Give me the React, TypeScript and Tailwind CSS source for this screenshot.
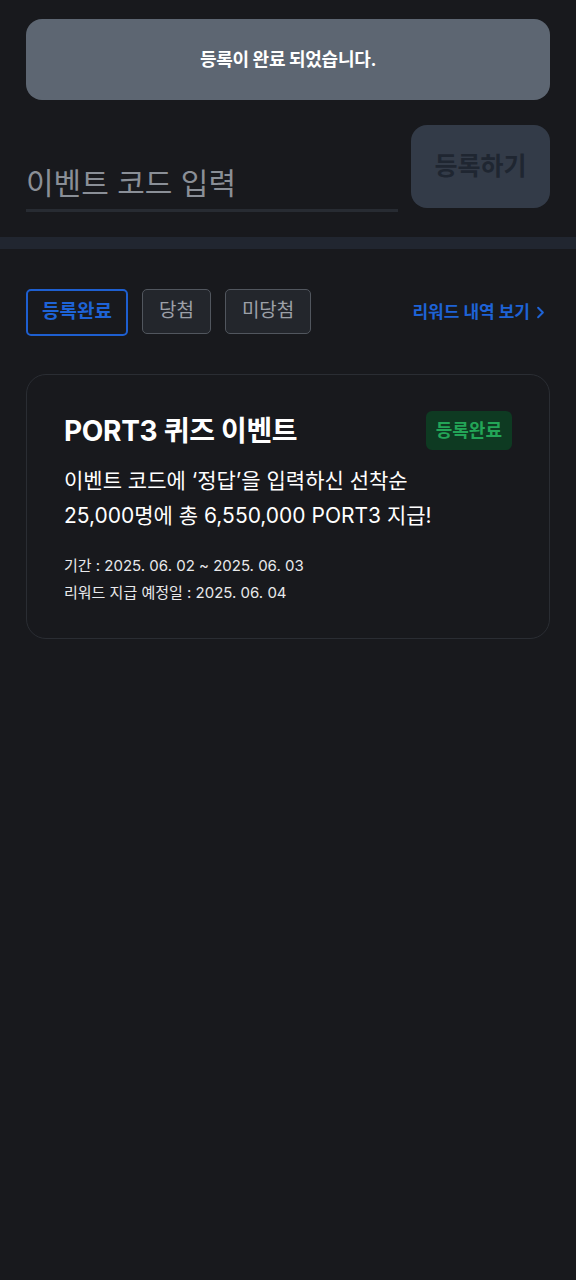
import { ChevronRight } from "lucide-react";

const tabs = [
  { label: "등록완료", active: true },
  { label: "당첨", active: false },
  { label: "미당첨", active: false },
];

export default function App() {
  return (
    <div
      className="min-h-[1280px] w-full bg-[#18191d] text-white"
      style={{ fontFamily: 'Inter, "Noto Sans CJK KR", sans-serif' }}
    >
      {/* ── Toast ─────────────────────────────────────────── */}
      <div className="px-[26px] pt-[19px]">
        <div className="flex h-[81px] items-center justify-center rounded-[16px] bg-[#5d6672]">
          <p className="text-[18px] font-bold tracking-[-0.3px] text-white">등록이 완료 되었습니다.</p>
        </div>
      </div>

      {/* ── Code input ───────────────────────────────────── */}
      <div className="flex items-end gap-[13px] px-[26px] pt-[25px]">
        <div className="mb-[-4px] flex-1">
          <input
            placeholder="이벤트 코드 입력"
            className="h-[60px] w-full border-b-[3px] border-[#272b32] bg-transparent pt-[4px] text-[30px] text-white outline-none placeholder:text-[#8a8f97]"
          />
        </div>
        <button className="h-[83px] w-[139px] shrink-0 rounded-[16px] bg-[#333b48] text-[25px] font-bold text-[#1f2631]">
          등록하기
        </button>
      </div>

      <div className="mt-[29px] h-[12px] bg-[#212630]" />

      {/* ── Tabs ─────────────────────────────────────────── */}
      <div className="flex items-center justify-between px-[26px] pt-[40px]">
        <div className="flex items-start gap-[14px]">
          {tabs.map((t) =>
            t.active ? (
              <button
                key={t.label}
                className="h-[47px] rounded-[5px] border-2 border-[#1e5fd0] px-[14px] text-[19px] font-bold text-[#1e63d6]"
              >
                {t.label}
              </button>
            ) : (
              <button
                key={t.label}
                className="h-[45px] rounded-[5px] border border-[#51565e] bg-[#23262c] px-[16px] text-[19px] text-[#9ca0a8]"
              >
                {t.label}
              </button>
            )
          )}
        </div>
        <button className="flex items-center gap-[1px] text-[17px] font-bold text-[#1e63d6]">
          리워드 내역 보기
          <ChevronRight size={19} strokeWidth={2.5} />
        </button>
      </div>

      {/* ── Event card ───────────────────────────────────── */}
      <div className="px-[26px] pt-[38px]">
        <div className="rounded-[20px] border border-[#2a2d33] px-[37px] pb-[32px] pt-[36px]">
          <div className="flex items-start justify-between">
            <h2 className="pt-[2px] text-[28px] font-bold leading-[36px] tracking-[-0.3px] text-white">PORT3 퀴즈 이벤트</h2>
            <span className="flex h-[39px] items-center rounded-[6px] bg-[#0e3a22] px-[10px] text-[18px] font-bold text-[#23a557]">
              등록완료
            </span>
          </div>
          <p className="mt-[13px] text-[21px] leading-[35px] text-white">
            이벤트 코드에 ‘정답’을 입력하신 선착순
            <br />
            25,000명에 총 6,550,000 PORT3 지급!
          </p>
          <div className="mt-[19px] text-[15px] leading-[27px] text-[#e8e9eb]">
            <p>기간 : 2025. 06. 02 ~ 2025. 06. 03</p>
            <p>리워드 지급 예정일 : 2025. 06. 04</p>
          </div>
        </div>
      </div>
    </div>
  );
}
